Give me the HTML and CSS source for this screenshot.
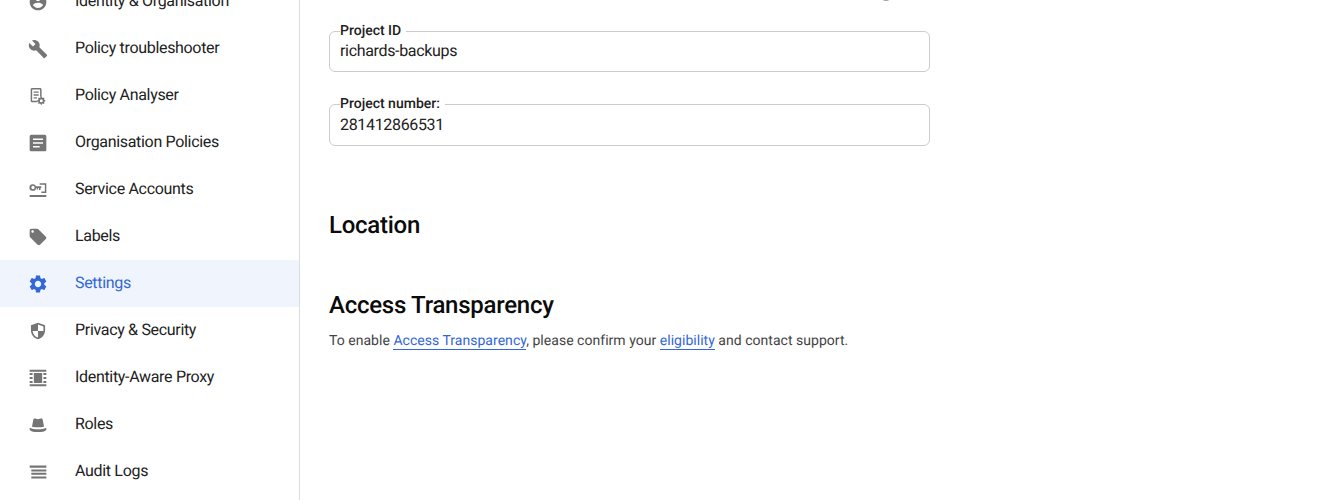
FILE: index.html
```html
<!DOCTYPE html>
<html lang="en">
<head>
<meta charset="utf-8">
<title>Settings</title>
<link rel="stylesheet" href="styles.css">
</head>
<body>
<div class="app">
  <nav class="sidebar">
    <a class="nav-item"><svg class="icon" viewBox="0 0 24 24"><path d="M12 2C6.48 2 2 6.48 2 12s4.48 10 10 10 10-4.48 10-10S17.52 2 12 2zm0 3c1.66 0 3 1.34 3 3s-1.34 3-3 3-3-1.34-3-3 1.34-3 3-3zm0 14.2c-2.5 0-4.71-1.28-6-3.22.03-1.99 4-3.08 6-3.08 1.99 0 5.97 1.09 6 3.08-1.29 1.94-3.5 3.22-6 3.22z"/></svg><span>Identity &amp; Organisation</span></a>
    <a class="nav-item"><svg class="icon" viewBox="0 0 24 24"><path d="M22.7 19l-9.1-9.1c.9-2.3.4-5-1.5-6.9-2-2-5-2.4-7.4-1.3L9 6 6 9 1.6 4.7C.4 7.1.9 10.1 2.9 12.1c1.9 1.9 4.6 2.4 6.9 1.5l9.1 9.1c.4.4 1 .4 1.4 0l2.3-2.3c.5-.4.5-1.1.1-1.4z"/></svg><span>Policy troubleshooter</span></a>
    <a class="nav-item"><svg class="icon" viewBox="0 0 24 24"><path fill-rule="evenodd" d="M5 2.4h9.5c1 0 1.8.8 1.8 1.8v8.6h-1.8V4.2H5v13.6h6.5v1.8H5c-1 0-1.8-.8-1.8-1.8V4.2c0-1 .8-1.8 1.8-1.8zM6.8 6.5h6v1.6h-6zM6.8 10h6v1.6h-6zM6.8 13.5h4v1.6h-4z"/><path fill-rule="evenodd" d="M15.5 12.6l1 .1.4 1.1 1.1.5 1-.5.8.8-.5 1 .4 1.1 1.1.4v1.1l-1.1.4-.4 1.1.5 1-.8.8-1-.5-1.1.4-.4 1.1h-1.1l-.4-1.1-1.1-.4-1 .5-.8-.8.5-1-.4-1.1-1.1-.4v-1.1l1.1-.4.4-1.1-.5-1 .8-.8 1 .5 1.1-.5zM16 15.8a1.8 1.8 0 1 0 0 3.6 1.8 1.8 0 0 0 0-3.6z"/></svg><span>Policy Analyser</span></a>
    <a class="nav-item"><svg class="icon" viewBox="0 0 24 24"><path fill-rule="evenodd" d="M4 2h16a2 2 0 0 1 2 2v16a2 2 0 0 1-2 2H4a2 2 0 0 1-2-2V4a2 2 0 0 1 2-2zM6 6.500v2h12v-2zM6 11v2h12v-2zM6 15.500v2h8v-2z"/></svg><span>Organisation Policies</span></a>
    <a class="nav-item"><svg class="icon" viewBox="0 0 24 24"><path fill-rule="evenodd" d="M6 5a4 4 0 0 1 3.700 2.500h6.300v2h-1v2.500h-1.800V9.500h-1v2h-1.800v-2H9.700A4 4 0 1 1 6 5zm0 2a2 2 0 1 0 0 4 2 2 0 0 0 0-4z"/><path d="M14 4h8v11.500h-6v-1.800h4.200V5.800H14zM2 18h20v2.400H2z"/></svg><span>Service Accounts</span></a>
    <a class="nav-item"><svg class="icon" viewBox="0 0 24 24"><path d="M21.410 11.580l-9-9C12.050 2.220 11.550 2 11 2H4c-1.100 0-2 .9-2 2v7c0 .55.22 1.050.59 1.420l9 9c.36.36.86.58 1.410.58.55 0 1.050-.22 1.410-.59l7-7c.37-.36.59-.86.59-1.410 0-.55-.23-1.060-.59-1.420zM5.500 7C4.670 7 4 6.330 4 5.500S4.670 4 5.500 4 7 4.670 7 5.500 6.330 7 5.500 7z"/></svg><span>Labels</span></a>
    <a class="nav-item active"><svg class="icon" viewBox="0 0 24 24"><path transform="translate(12 12) scale(1.06) translate(-12 -12)" d="M19.140 12.940c.04-.3.06-.61.06-.94 0-.32-.02-.64-.07-.94l2.030-1.580c.18-.14.23-.41.12-.61l-1.920-3.320c-.12-.22-.37-.29-.59-.22l-2.390.96c-.5-.38-1.030-.7-1.620-.94l-.36-2.540c-.04-.24-.24-.41-.48-.41h-3.840c-.24 0-.43.17-.47.41l-.36 2.540c-.59.24-1.130.57-1.620.94l-2.390-.96c-.22-.08-.47 0-.59.22L2.740 8.870c-.12.21-.08.47.12.61l2.030 1.580c-.05.3-.09.63-.09.94s.02.64.07.94l-2.030 1.580c-.18.14-.23.41-.12.61l1.920 3.320c.12.22.37.29.59.22l2.390-.96c.5.38 1.030.7 1.620.94l.36 2.540c.05.24.24.41.48.41h3.840c.24 0 .44-.17.47-.41l.36-2.540c.59-.24 1.130-.56 1.620-.94l2.390.96c.22.08.47 0 .59-.22l1.920-3.320c.12-.22.07-.47-.12-.61l-2.010-1.580zM12 15.600c-1.980 0-3.600-1.620-3.600-3.600s1.620-3.600 3.600-3.600 3.600 1.620 3.600 3.600-1.620 3.600-3.600 3.600z"/></svg><span>Settings</span></a>
    <a class="nav-item"><svg class="icon" viewBox="0 0 24 24"><path fill-rule="evenodd" d="M12 2L3.500 5.200v6c0 5.200 3.600 9.800 8.500 10.800 4.900-1 8.500-5.600 8.500-10.800v-6zM12 4.300l6.500 2.300V12H12zM5.500 12H12v7.900c-3.400-.8-6-4-6.500-7.900z"/></svg><span>Privacy &amp; Security</span></a>
    <a class="nav-item"><svg class="icon" viewBox="0 0 24 24"><path d="M2 2h20v2.400H2zM2 19.600h20V22H2zM7 6h10v12H7zM2 6h3.500v2.400H2zM2 10.800h3.500v2.400H2zM2 15.600h3.500V18H2zM18.500 6H22v2.400h-3.500zM18.500 10.800H22v2.400h-3.500zM18.500 15.600H22V18h-3.500z"/></svg><span>Identity-Aware Proxy</span></a>
    <a class="nav-item"><svg class="icon" viewBox="0 0 24 24"><path d="M4.800 14l1.500-8.300c.3-1.500 1.400-1.900 2.500-1.500l3.200 1 3.200-1c1.100-.4 2.200 0 2.500 1.500l1.500 8.300c-2.200.5-4.600.7-7.200.7s-5-.2-7.200-.7zM2 15.300c3 1.300 6.300 1.900 10 1.900s7-.6 10-1.900v2c0 1.800-4.500 3.200-10 3.200S2 19.100 2 17.300z"/></svg><span>Roles</span></a>
    <a class="nav-item"><svg class="icon" viewBox="0 0 24 24"><path d="M2 4.200h20v2.800H2zM4 9h18v2.400H4zM4 13h18v2.400H4zM4 17.400h18v2.400H4z"/></svg><span>Audit Logs</span></a>
  </nav>
  <main class="content">
    <span class="clipped-dot"></span>
    <fieldset class="field">
      <legend class="field-label">Project ID</legend>
      <div class="field-value">richards-backups</div>
    </fieldset>
    <fieldset class="field">
      <legend class="field-label">Project number:</legend>
      <div class="field-value">281412866531</div>
    </fieldset>
    <h2 class="heading heading-location">Location</h2>
    <h2 class="heading heading-access">Access Transparency</h2>
    <p class="note">To enable <a class="link">Access Transparency</a>, please confirm your <a class="link">eligibility</a> and contact support.</p>
  </main>
</div>
</body>
</html>
```
FILE: styles.css
```css
* { box-sizing: border-box; }
html, body { margin: 0; padding: 0; height: 100%; background: #fff; overflow: hidden; }
body { font-family: Roboto, "Liberation Sans", sans-serif; color: #212121; text-rendering: geometricPrecision; }
.app { display: flex; height: 500px; overflow: hidden; }
.sidebar { width: 300px; flex: none; margin-top: -22px; border-right: 1px solid #dadce0; }
.nav-item { display: flex; align-items: center; height: 47px; padding-left: 28px; font-size: 16px; letter-spacing: -0.32px; color: #212121; }
.nav-item span { margin-left: 27px; margin-bottom: 2px; }
.icon { width: 20px; height: 20px; flex: none; fill: #757575; }
.nav-item.active { background: #eff4fd; color: #3367d6; }
.nav-item.active .icon { fill: #3367d6; }
.content { position: relative; flex: 1; padding: 22.5px 0 0 29px; }
.clipped-dot { position: absolute; left: 580px; top: -11px; width: 12px; height: 12px; border-radius: 50%; background: #9e9e9e; }
.field { width: 601px; margin: 0 0 24px; padding: 0 10px 10px; border: 1px solid #cccccc; border-radius: 6px; min-width: 0; }
.field-label { margin-left: 0; padding: 0 5px 1px 0; font-size: 14px; line-height: 16px; font-weight: 500; color: #212121; }
.field-value { margin-top: 1.5px; font-size: 16px; line-height: 20px; letter-spacing: -0.33px; }
.heading { margin: 0; font-size: 24px; line-height: 32px; font-weight: 500; letter-spacing: -0.26px; color: #0b0b0b; }
.heading-location { margin-top: 63.5px; }
.heading-access { margin-top: 48px; }
.note { margin: 10px 0 0; font-size: 14px; line-height: 20px; letter-spacing: 0.03px; color: #444; }
.link { color: #3367d6; border-bottom: 1px solid #3367d6; }
```
